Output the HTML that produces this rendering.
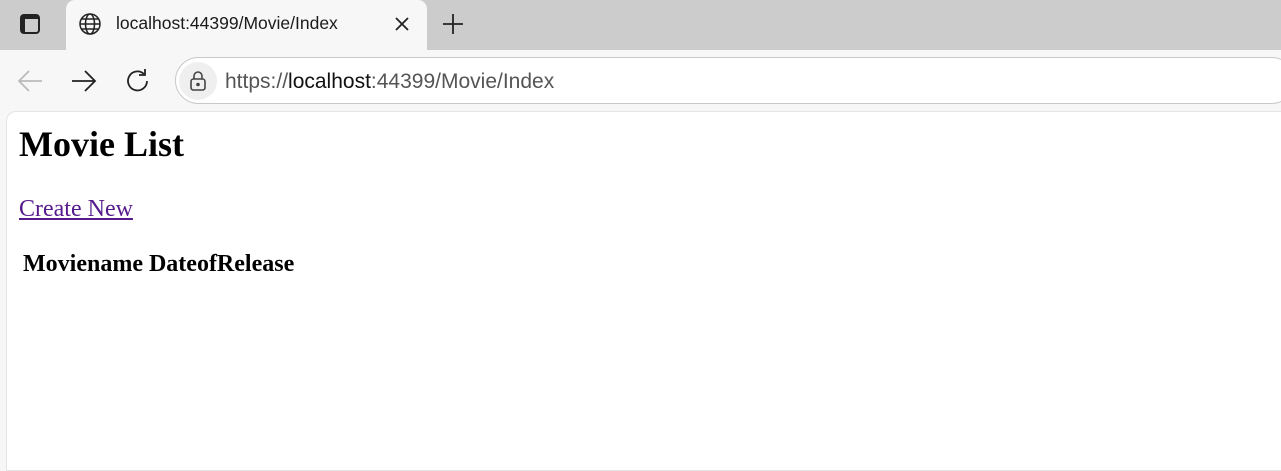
<!DOCTYPE html>
<html><head><style>
*{margin:0;padding:0;box-sizing:border-box}
body{width:1281px;height:456px;overflow:hidden;background:#f7f7f7;position:relative;font-family:"Liberation Sans",sans-serif}
.tabs{position:absolute;left:0;top:0;width:1281px;height:50px;background:#cccccc}
.tab{position:absolute;left:66px;top:0;width:361px;height:52px;background:#f7f7f7;border-radius:9px 9px 0 0}
.ttl{position:absolute;left:116px;top:13px;font-size:17.5px;color:#1a1a1a}
.addr{position:absolute;left:175px;top:57px;width:1120px;height:47px;background:#fff;border:1px solid #c8c8c8;border-radius:24px}
.lockbg{position:absolute;left:179px;top:62px;width:38px;height:38px;border-radius:19px;background:#efefef}
.url{position:absolute;left:225px;top:70px;font-size:21px;color:#555}
.url b{font-weight:normal;color:#111}
.page{position:absolute;left:6px;top:111px;width:1290px;height:360px;background:#fff;border-radius:10px 0 0 0;border:1px solid #e4e4e4;font-family:"Liberation Serif",serif}
.t{position:absolute;white-space:nowrap;line-height:1}
</style></head><body>
<div class="tabs"></div>
<div class="tab"></div>
<svg style="position:absolute;left:19px;top:13px" width="22" height="22" viewBox="0 0 22 22"><rect x="2" y="2" width="18" height="18" rx="3" fill="none" stroke="#222" stroke-width="2"/><rect x="2" y="2" width="18" height="4" fill="#222"/><rect x="2" y="2" width="4" height="18" fill="#222"/></svg>
<svg style="position:absolute;left:78px;top:12px" width="24" height="24" viewBox="0 0 24 24" fill="none" stroke="#222" stroke-width="1.5"><circle cx="12" cy="12" r="10"/><ellipse cx="12" cy="12" rx="4.5" ry="10"/><path d="M2 12h20M4 7h16M4 17h16"/></svg>
<div class="ttl">localhost:44399/Movie/Index</div>
<svg style="position:absolute;left:394px;top:16px" width="16" height="16" viewBox="0 0 16 16" stroke="#222" stroke-width="1.8"><path d="M2 2L14 14M14 2L2 14"/></svg>
<svg style="position:absolute;left:441px;top:12px" width="24" height="24" viewBox="0 0 24 24" stroke="#222" stroke-width="1.8"><path d="M12 2v20M2 12h20"/></svg>
<svg style="position:absolute;left:16px;top:68px" width="28" height="26" viewBox="0 0 28 26" fill="none" stroke="#bbb" stroke-width="1.8"><path d="M26 13H3M13 3L3 13l10 10"/></svg>
<svg style="position:absolute;left:70px;top:68px" width="28" height="26" viewBox="0 0 28 26" fill="none" stroke="#222" stroke-width="1.8"><path d="M2 13h23M15 3l10 10-10 10"/></svg>
<svg style="position:absolute;left:124px;top:67px" width="28" height="28" viewBox="0 0 28 28" fill="none" stroke="#222" stroke-width="1.8"><path d="M23 14a9.5 9.5 0 1 1-3-7"/><path d="M21 2v6h-6"/></svg>
<div class="addr"></div>
<div class="lockbg"></div>
<svg style="position:absolute;left:188px;top:70px" width="20" height="22" viewBox="0 0 20 22" fill="none" stroke="#444" stroke-width="1.6"><rect x="3" y="9" width="14" height="11" rx="2.5"/><path d="M6 9V6a4 4 0 0 1 8 0v3"/><circle cx="10" cy="14.5" r="1" fill="#444"/></svg>
<div class="url">https://<b>localhost</b>:44399/Movie/Index</div>
<div class="page">
<div class="t" style="left:12px;top:14px;font-size:36px;font-weight:bold">Movie List</div>
<div class="t" style="left:12px;top:85px;font-size:24px;color:#551a8b;text-decoration:underline">Create New</div>
<div class="t" style="left:16px;top:140px;font-size:24px;font-weight:bold">Moviename DateofRelease</div>
</div>
</body></html>
